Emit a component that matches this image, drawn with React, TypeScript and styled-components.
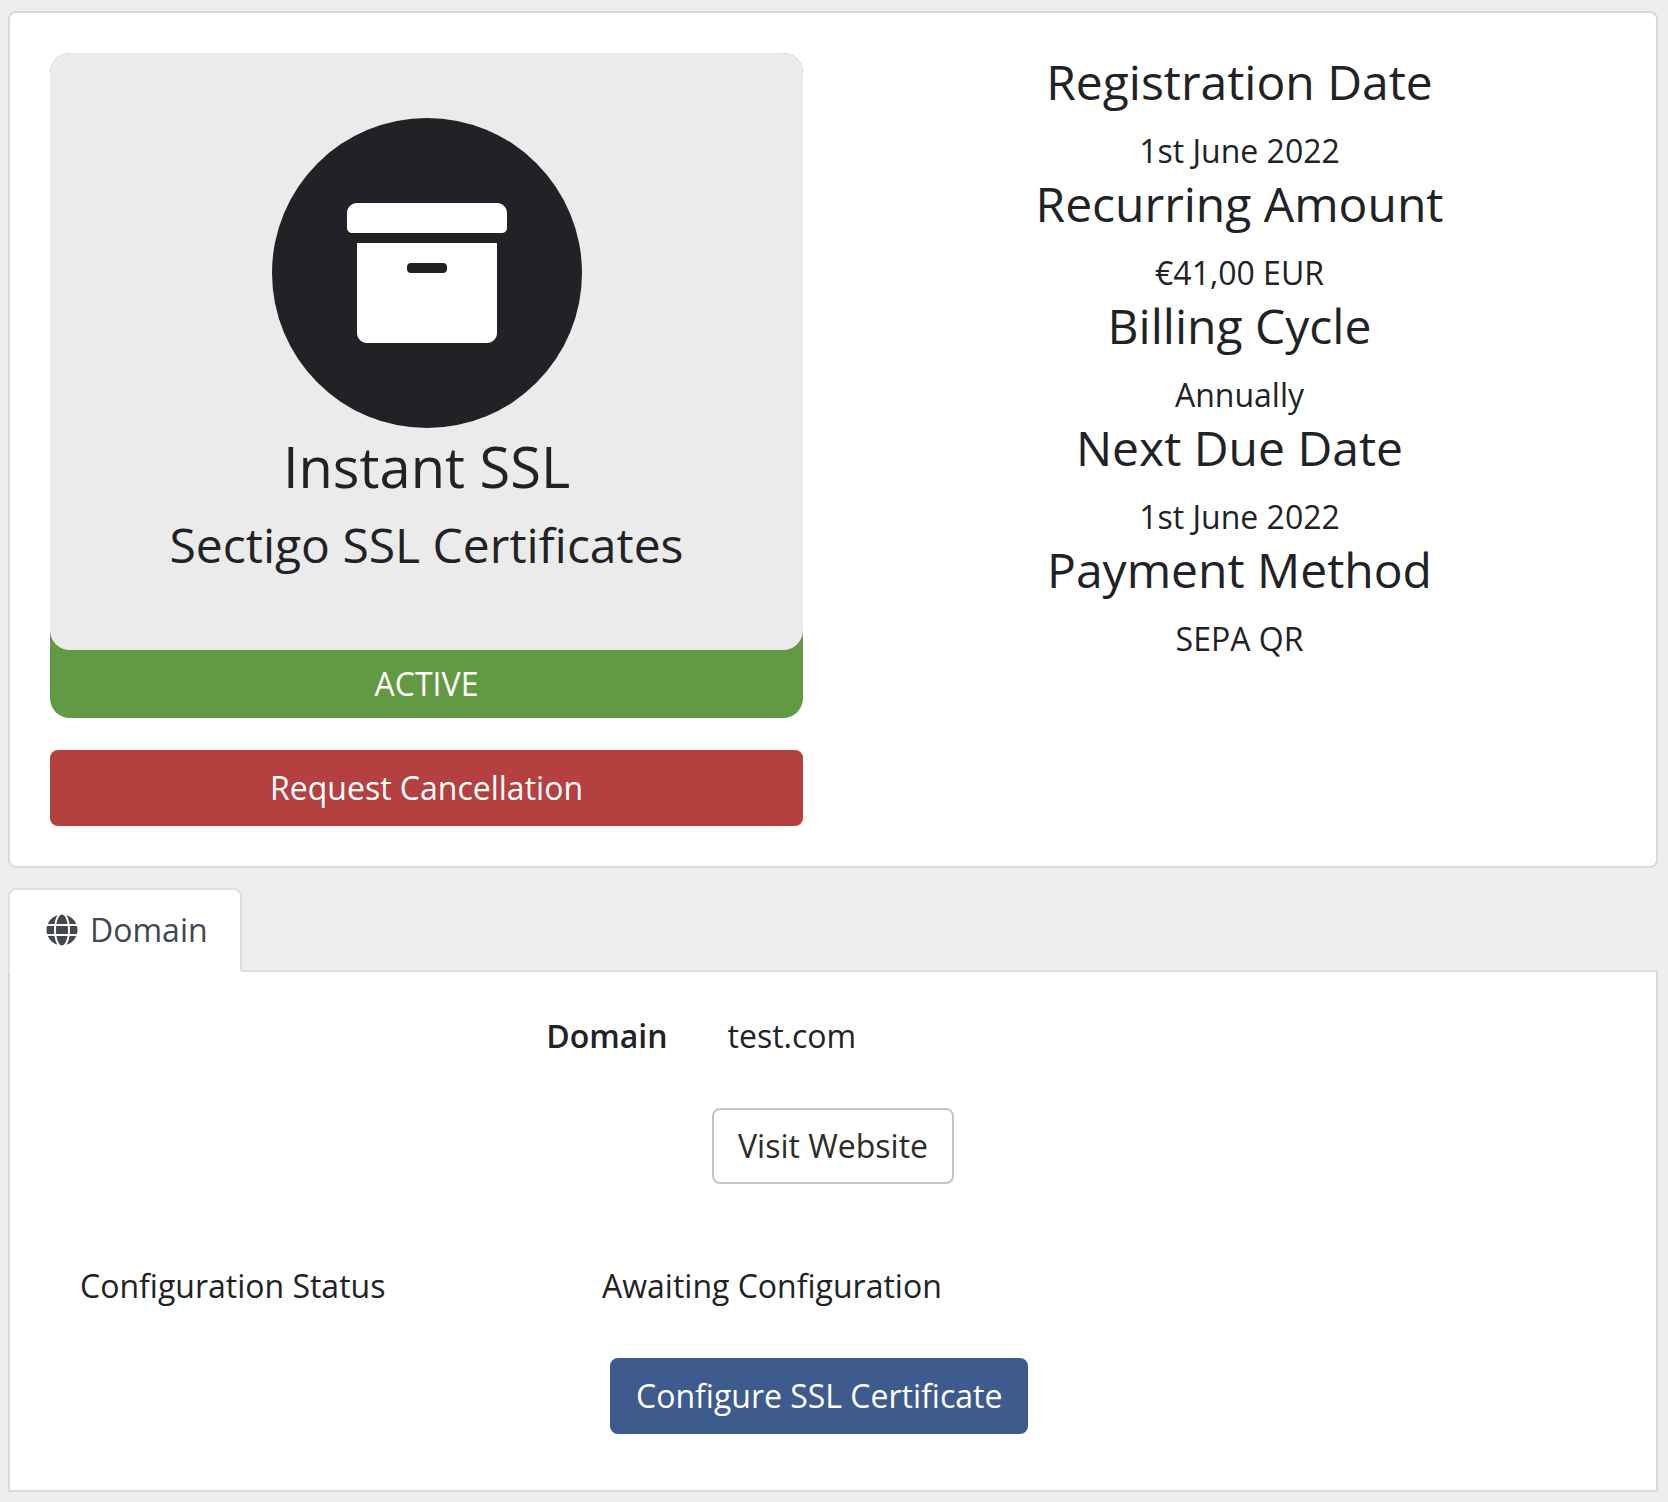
import React from "react";
import styled, { createGlobalStyle } from "styled-components";
import { FaArchive, FaGlobe } from "react-icons/fa";

const GlobalStyle = createGlobalStyle`
  *, *::before, *::after { box-sizing: border-box; }
  body {
    margin: 0;
    background: #eeeeee;
    color: #212226;
    font-family: "Open Sans", "Noto Sans", sans-serif;
    font-size: 32px;
    line-height: 48px;
  }
`;

const Page = styled.main`
  padding: 11px 10px 10px 8px;
`;

const Card = styled.section`
  display: grid;
  grid-template-columns: 1fr 1fr;
  column-gap: 60px;
  padding: 40px;
  background: #ffffff;
  border: 2px solid #d9d9d9;
  border-radius: 8px;
`;

const ProductColumn = styled.div`
  display: flex;
  flex-direction: column;
  gap: 32px;
`;

const Product = styled.div`
  background: #629a44;
  border-radius: 20px;
  text-align: center;
`;

const ProductBody = styled.div`
  display: flex;
  flex-direction: column;
  align-items: center;
  padding: 60px;
  background: #ebebeb;
  border-radius: 20px;
`;

const IconCircle = styled.div`
  display: grid;
  place-items: center;
  width: 310px;
  height: 310px;
  margin: 5px 0;
  border-radius: 50%;
  background: #212226;
  color: #ffffff;
`;

const ProductName = styled.h1`
  margin: 0 0 16px;
  font-size: 56px;
  font-weight: 400;
  line-height: 67px;
`;

const Heading = styled.h2`
  margin: 0 0 16px;
  font-size: 48px;
  font-weight: 400;
  line-height: 58px;
`;

const Status = styled.div`
  padding: 10px;
  color: #ffffff;
  text-transform: uppercase;
`;

const variants = {
  danger: { background: "#b54040", border: "#b54040", color: "#ffffff" },
  primary: { background: "#3d5b8c", border: "#3d5b8c", color: "#ffffff" },
  outline: { background: "#ffffff", border: "#c4c4c4", color: "#2c2c2c" },
};

const Button = styled.button<{ $variant: keyof typeof variants }>`
  padding: 12px 24px;
  background: ${(p) => variants[p.$variant].background};
  border: 2px solid ${(p) => variants[p.$variant].border};
  border-radius: 8px;
  color: ${(p) => variants[p.$variant].color};
  font: inherit;
  text-align: center;
  cursor: pointer;
`;

const BillingColumn = styled.div`
  text-align: center;
`;

const Tabs = styled.div`
  display: flex;
  margin-top: 20px;
`;

const Tab = styled.button`
  display: flex;
  align-items: center;
  gap: 8px;
  padding: 16px 32px;
  margin-bottom: -2px;
  background: #ffffff;
  border: 2px solid #dadfe4;
  border-bottom-color: #ffffff;
  border-radius: 8px 8px 0 0;
  color: #44474e;
  font: inherit;
  position: relative;
  cursor: pointer;
`;

const TabIcon = styled.span`
  display: grid;
  place-items: center;
  width: 40px;
`;

const Panel = styled.section`
  padding: 40px 40px 56px;
  background: #ffffff;
  border: 2px solid #d9d9d9;
  border-top-color: #dadfe4;
`;

const DomainRow = styled.dl`
  display: grid;
  grid-template-columns: 5fr 7fr;
  margin: 0 -30px 48px;
`;

const Term = styled.dt`
  padding: 0 30px;
  font-weight: 600;
  text-align: right;
`;

const Value = styled.dd`
  margin: 0;
  padding: 0 30px;
`;

const CenteredActions = styled.div`
  display: flex;
  justify-content: center;
`;

const ConfigGrid = styled.div`
  display: grid;
  grid-template-columns: 1fr 2fr;
  row-gap: 48px;
  margin-top: 78px;
`;

const ConfigCell = styled.div`
  padding: 0 30px;
`;

const ConfigActions = styled.div`
  grid-column: 2;
  display: flex;
  padding: 0 38px;
`;

const billing = [
  ["Registration Date", "1st June 2022"],
  ["Recurring Amount", "€41,00 EUR"],
  ["Billing Cycle", "Annually"],
  ["Next Due Date", "1st June 2022"],
  ["Payment Method", "SEPA QR"],
];

export default function App() {
  return (
    <>
      <GlobalStyle />
      <Page>
        <Card>
          <ProductColumn>
            <Product>
              <ProductBody>
                <IconCircle>
                  <FaArchive size={160} aria-hidden />
                </IconCircle>
                <ProductName>Instant SSL</ProductName>
                <Heading>Sectigo SSL Certificates</Heading>
              </ProductBody>
              <Status>Active</Status>
            </Product>
            <Button type="button" $variant="danger">
              Request Cancellation
            </Button>
          </ProductColumn>
          <BillingColumn>
            {billing.map(([label, value]) => (
              <div key={label}>
                <Heading>{label}</Heading>
                <div>{value}</div>
              </div>
            ))}
          </BillingColumn>
        </Card>

        <Tabs role="tablist">
          <Tab
            type="button"
            role="tab"
            id="tab-domain"
            aria-selected="true"
            aria-controls="panel-domain"
          >
            <TabIcon>
              <FaGlobe size={32} aria-hidden />
            </TabIcon>
            Domain
          </Tab>
        </Tabs>
        <Panel role="tabpanel" id="panel-domain" aria-labelledby="tab-domain">
          <DomainRow>
            <Term>Domain</Term>
            <Value>test.com</Value>
          </DomainRow>
          <CenteredActions>
            <Button type="button" $variant="outline">
              Visit Website
            </Button>
          </CenteredActions>
          <ConfigGrid>
            <ConfigCell>Configuration Status</ConfigCell>
            <ConfigCell>Awaiting Configuration</ConfigCell>
            <ConfigActions>
              <Button type="button" $variant="primary">
                Configure SSL Certificate
              </Button>
            </ConfigActions>
          </ConfigGrid>
        </Panel>
      </Page>
    </>
  );
}
